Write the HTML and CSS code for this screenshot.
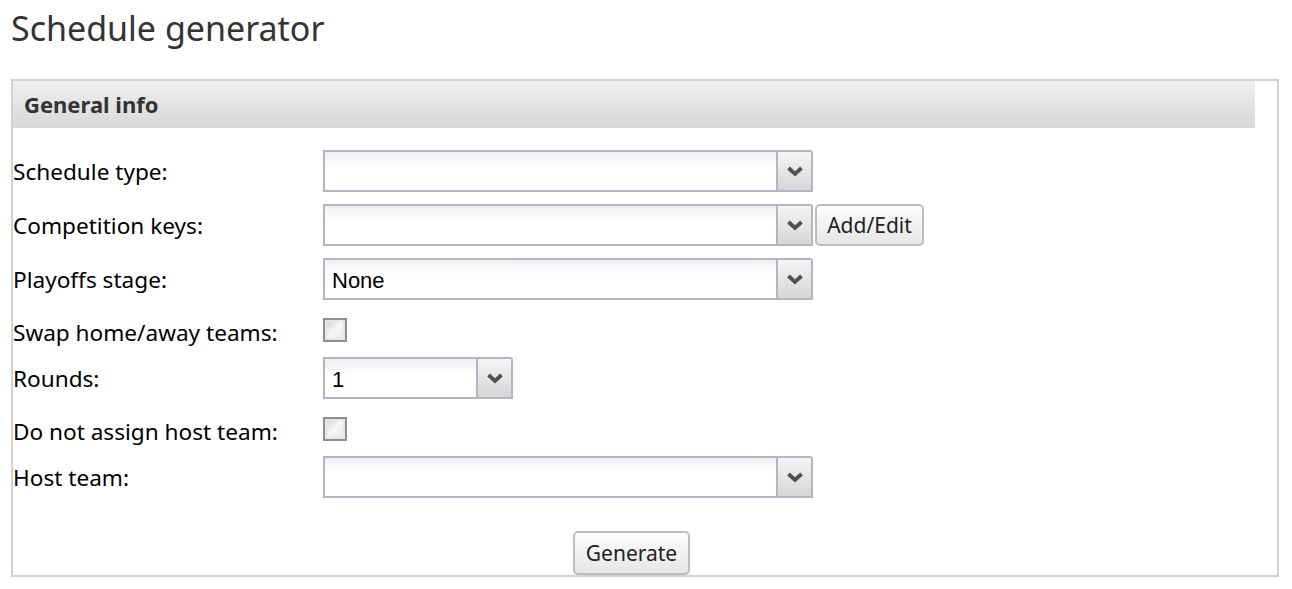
FILE: index.html
```html
<!DOCTYPE html>
<html lang="en">
<head>
    <meta charset="UTF-8">
    <title>Schedule generator</title>
    <link rel="stylesheet" href="styles.css">
</head>
<body>
    <h1 class="page-title">Schedule generator</h1>

    <div class="panel">
        <div class="panel-header">General info</div>

        <div class="form">
            <div class="row">
                <label class="label">Schedule type:</label>
                <div class="combo">
                    <span class="combo-text"></span>
                    <span class="combo-btn"><svg width="18" height="11" viewBox="0 0 18 11"><path d="M2.5 2 L9 8 L15.5 2" fill="none" stroke="#505050" stroke-width="3.8"/></svg></span>
                </div>
            </div>

            <div class="row">
                <label class="label">Competition keys:</label>
                <div class="combo">
                    <span class="combo-text"></span>
                    <span class="combo-btn"><svg width="18" height="11" viewBox="0 0 18 11"><path d="M2.5 2 L9 8 L15.5 2" fill="none" stroke="#505050" stroke-width="3.8"/></svg></span>
                </div>
                <button class="btn btn-side">Add/Edit</button>
            </div>

            <div class="row">
                <label class="label">Playoffs stage:</label>
                <div class="combo">
                    <span class="combo-text">None</span>
                    <span class="combo-btn"><svg width="18" height="11" viewBox="0 0 18 11"><path d="M2.5 2 L9 8 L15.5 2" fill="none" stroke="#505050" stroke-width="3.8"/></svg></span>
                </div>
            </div>

            <div class="row row-check">
                <label class="label">Swap home/away teams:</label>
                <span class="check"></span>
            </div>

            <div class="row">
                <label class="label">Rounds:</label>
                <div class="combo combo-small">
                    <span class="combo-text">1</span>
                    <span class="combo-btn"><svg width="18" height="11" viewBox="0 0 18 11"><path d="M2.5 2 L9 8 L15.5 2" fill="none" stroke="#505050" stroke-width="3.8"/></svg></span>
                </div>
            </div>

            <div class="row row-check">
                <label class="label">Do not assign host team:</label>
                <span class="check"></span>
            </div>

            <div class="row">
                <label class="label">Host team:</label>
                <div class="combo">
                    <span class="combo-text"></span>
                    <span class="combo-btn"><svg width="18" height="11" viewBox="0 0 18 11"><path d="M2.5 2 L9 8 L15.5 2" fill="none" stroke="#505050" stroke-width="3.8"/></svg></span>
                </div>
            </div>

            <div class="actions">
                <button class="btn btn-main">Generate</button>
            </div>
        </div>
    </div>
</body>
</html>
```

FILE: styles.css
```css
body {
    margin: 0 13px 0 11px;
    padding: 0;
    font-family: "Noto Sans", sans-serif;
    color: #111;
    background: #fff;
}

.page-title {
    font-weight: normal;
    font-size: 34px;
    line-height: 42px;
    color: #333;
    margin: 7px 0 30px;
}

.panel {
    border: 2px solid #d2d2d2;
    height: 494px;
}

.panel-header {
    margin-right: 22px;
    height: 47px;
    line-height: 47px;
    padding-left: 11px;
    font-size: 22px;
    font-weight: bold;
    color: #333;
    background: linear-gradient(#efefef, #d8d8d8);
}

.form {
    margin-right: 22px;
    padding-top: 22px;
}

.row {
    display: flex;
    align-items: center;
    height: 42px;
    margin-bottom: 12px;
}

.row-check {
    height: 33px;
    align-items: flex-start;
}

.label {
    width: 310px;
    font-size: 22.6px;
    color: #000;
}

.row-check .label {
    line-height: 40px;
    margin-top: 1px;
}

.combo {
    display: flex;
    width: 490px;
    height: 42px;
    box-sizing: border-box;
    border: 2px solid #b4b4c6;
    border-radius: 0 3px 0 0;
    background: linear-gradient(#eef0f1, #fff 40%);
}

.combo-small {
    width: 190px;
}

.combo-text {
    flex: 1;
    padding-left: 7px;
    font-family: "Liberation Sans", Arial, sans-serif;
    font-size: 22px;
    line-height: 42px;
    color: #000;
}

.combo-btn {
    width: 33px;
    border-left: 2px solid #b4b4c6;
    background: linear-gradient(#f5f5f5, #d6d6d6);
    display: flex;
    align-items: center;
    justify-content: center;
}

.check {
    margin-top: 6px;
    width: 20px;
    height: 20px;
    border: 2px solid #8e8e8e;
    background: linear-gradient(135deg, #d0d0d0, #f6f6f6 50%, #e2e2e2);
    box-shadow: inset 0 0 0 2px #e6e6e6;
}

.btn {
    font-family: "Noto Sans", sans-serif;
    font-size: 21px;
    color: #222;
    border: 2px solid #bdbdbd;
    border-radius: 5px;
    background: linear-gradient(#fdfdfd, #e6e6e6);
    padding: 0;
    height: 42px;
}

.btn-side {
    width: 109px;
    margin-left: 2px;
}

.actions {
    display: flex;
    justify-content: center;
    padding-top: 21px;
    padding-right: 5px;
}

.btn-main {
    width: 117px;
    height: 44px;
}
```
